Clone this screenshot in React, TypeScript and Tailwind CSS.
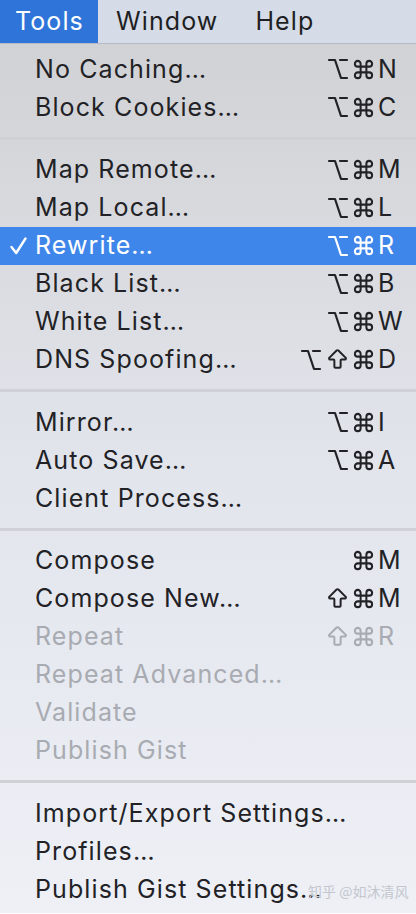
import React from "react";
import { Command, Option, ArrowBigUp } from "lucide-react";

type Item = {
  label: string;
  mods?: ("opt" | "shift" | "cmd")[];
  keyChar?: string;
  disabled?: boolean;
  checked?: boolean;
  active?: boolean;
};

const groups: Item[][] = [
  [
    { label: "No Caching…", mods: ["opt", "cmd"], keyChar: "N" },
    { label: "Block Cookies…", mods: ["opt", "cmd"], keyChar: "C" },
  ],
  [
    { label: "Map Remote…", mods: ["opt", "cmd"], keyChar: "M" },
    { label: "Map Local…", mods: ["opt", "cmd"], keyChar: "L" },
    { label: "Rewrite…", mods: ["opt", "cmd"], keyChar: "R", checked: true, active: true },
    { label: "Black List…", mods: ["opt", "cmd"], keyChar: "B" },
    { label: "White List…", mods: ["opt", "cmd"], keyChar: "W" },
    { label: "DNS Spoofing…", mods: ["opt", "shift", "cmd"], keyChar: "D" },
  ],
  [
    { label: "Mirror…", mods: ["opt", "cmd"], keyChar: "I" },
    { label: "Auto Save…", mods: ["opt", "cmd"], keyChar: "A" },
    { label: "Client Process…" },
  ],
  [
    { label: "Compose", mods: ["cmd"], keyChar: "M" },
    { label: "Compose New…", mods: ["shift", "cmd"], keyChar: "M" },
    { label: "Repeat", mods: ["shift", "cmd"], keyChar: "R", disabled: true },
    { label: "Repeat Advanced…", disabled: true },
    { label: "Validate", disabled: true },
    { label: "Publish Gist", disabled: true },
  ],
  [
    { label: "Import/Export Settings…" },
    { label: "Profiles…" },
    { label: "Publish Gist Settings…" },
  ],
];

function Mod({ m }: { m: "opt" | "shift" | "cmd" }) {
  if (m === "opt") return <Option size={24} strokeWidth={2.2} className="-mx-[2px]" />;
  if (m === "shift") return <ArrowBigUp size={25} strokeWidth={1.9} className="-mx-[2px]" />;
  return <Command size={23} strokeWidth={2.1} className="-mx-[2px]" />;
}

function Row({ item }: { item: Item }) {
  const color = item.active
    ? "text-white"
    : item.disabled
    ? "text-[#a8abb1]"
    : "text-[#222226]";
  return (
    <div
      className={`flex items-center h-[38px] ${item.active ? "bg-[#3f86ea]" : ""} ${color}`}
    >
      <div className="w-[35px] flex items-center justify-center pl-[2px]">
        {item.checked && (
          <svg width="19" height="20" viewBox="0 0 19 20" fill="none">
            <path d="M2.5 11 L7.2 17 L16.5 2.5" stroke="currentColor" strokeWidth="2.4" strokeLinecap="round" strokeLinejoin="round" />
          </svg>
        )}
      </div>
      <div className="flex-1 text-[25px] tracking-[1.1px] leading-none whitespace-nowrap">{item.label}</div>
      <div className="flex items-center justify-end gap-[6px] pr-[5px]">
        {item.mods?.map((m, i) => <Mod key={i} m={m} />)}
      </div>
      <div className="w-[38px] text-[25px] tracking-[1px] leading-none">{item.keyChar ?? ""}</div>
    </div>
  );
}

export default function App() {
  return (
    <div
      className="w-[416px] h-[914px] overflow-hidden relative"
      style={{ fontFamily: "Inter, 'Noto Sans', 'Noto Sans CJK SC', sans-serif" }}
    >
      <div className="flex items-stretch h-[44px] bg-[#d5dbe7] border-b border-[#b6bac2] text-[25px] tracking-[1.1px] text-[#1e1f23]">
        <div className="w-[98px] bg-[#2f74d8] text-white flex items-center pl-[15px]">Tools</div>
        <div className="flex items-center pl-[18px]">Window</div>
        <div className="flex items-center pl-[37px]">Help</div>
      </div>
      <div className="h-[869px] bg-gradient-to-b from-[#d1d2d5] via-[#e2e5ec] to-[#eef0f6] pt-[6px]">
        {groups.map((g, gi) => (
          <div key={gi}>
            {gi > 0 && (
              <div className="h-[24.5px] flex items-center">
                <div className="w-full h-[3px] bg-[#cfd1d6]" />
              </div>
            )}
            {g.map((it, i) => (
              <Row key={i} item={it} />
            ))}
          </div>
        ))}
      </div>
      <div
        className="absolute left-[308px] top-[884px] text-[14px] leading-none text-[#c3c6cd] whitespace-nowrap"
        style={{ fontFamily: "'Noto Sans CJK SC', 'Noto Sans', sans-serif" }}
      >
        知乎 @如沐清风
      </div>
    </div>
  );
}
